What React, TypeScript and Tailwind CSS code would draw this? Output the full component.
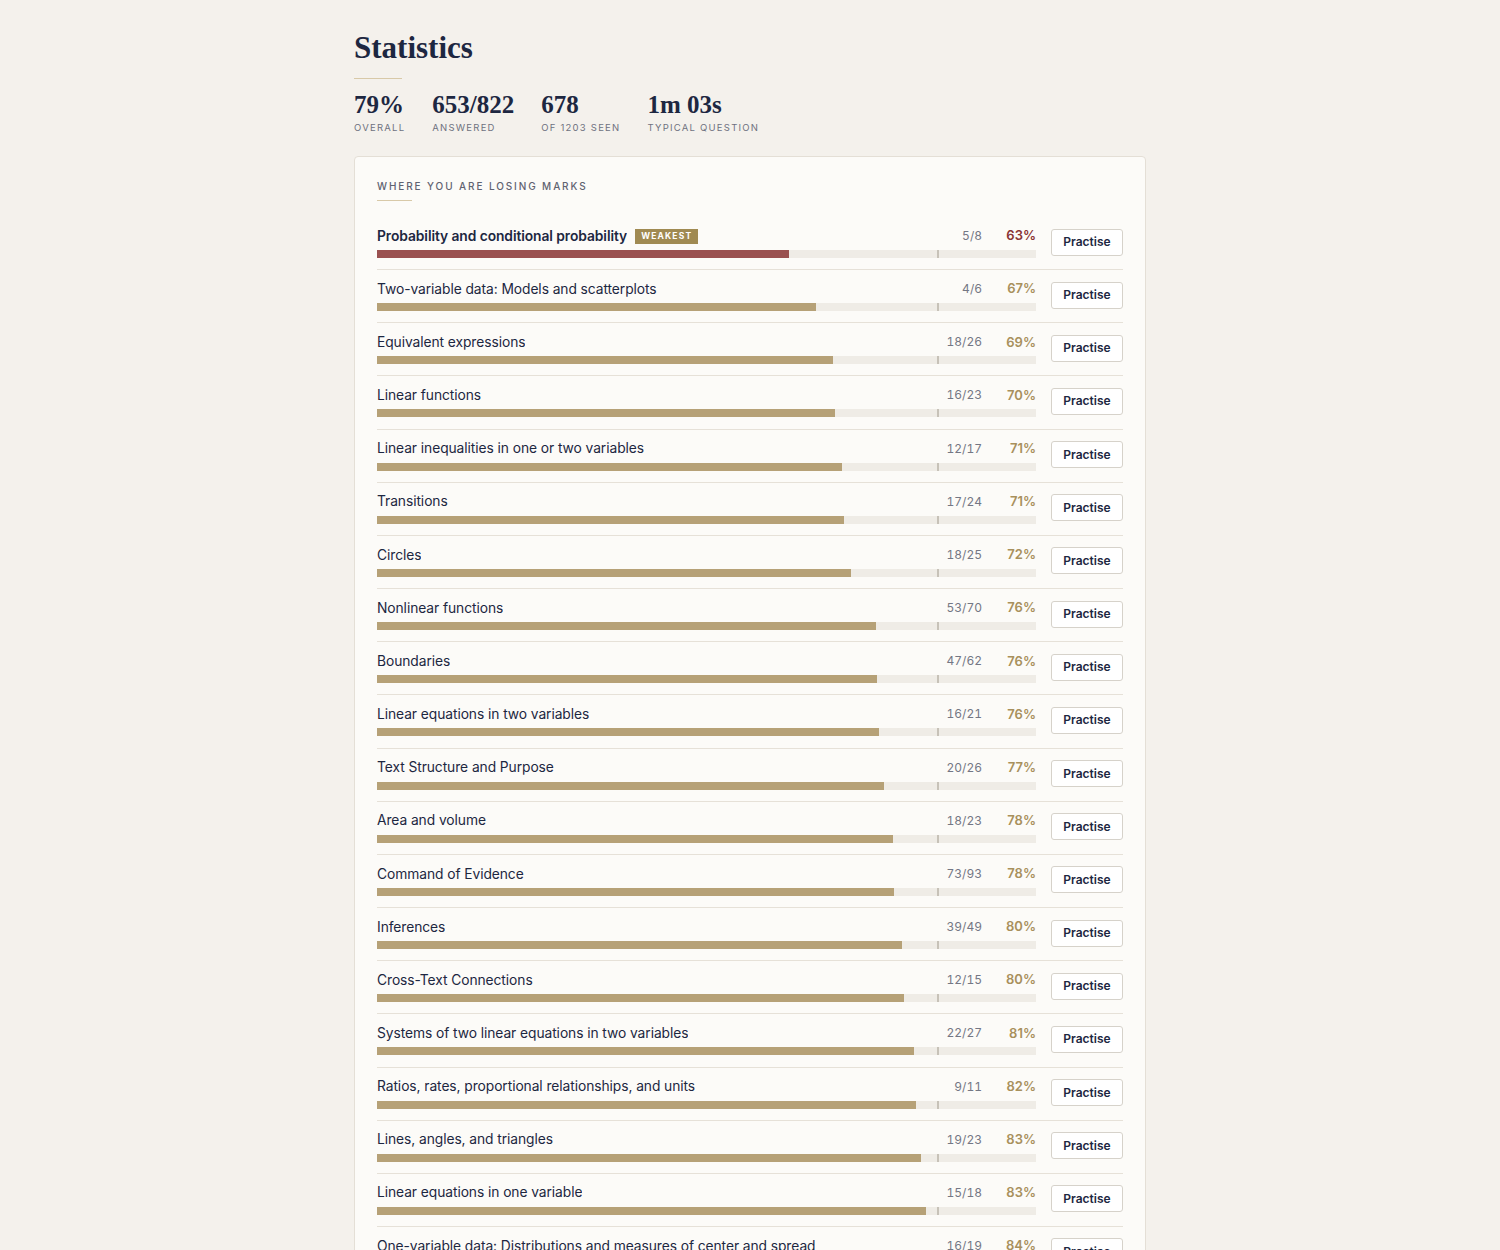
import React from 'react';

type Topic = { name: string; correct: number; total: number };

const topics: Topic[] = [
  { name: 'Probability and conditional probability', correct: 5, total: 8 },
  { name: 'Two-variable data: Models and scatterplots', correct: 4, total: 6 },
  { name: 'Equivalent expressions', correct: 18, total: 26 },
  { name: 'Linear functions', correct: 16, total: 23 },
  { name: 'Linear inequalities in one or two variables', correct: 12, total: 17 },
  { name: 'Transitions', correct: 17, total: 24 },
  { name: 'Circles', correct: 18, total: 25 },
  { name: 'Nonlinear functions', correct: 53, total: 70 },
  { name: 'Boundaries', correct: 47, total: 62 },
  { name: 'Linear equations in two variables', correct: 16, total: 21 },
  { name: 'Text Structure and Purpose', correct: 20, total: 26 },
  { name: 'Area and volume', correct: 18, total: 23 },
  { name: 'Command of Evidence', correct: 73, total: 93 },
  { name: 'Inferences', correct: 39, total: 49 },
  { name: 'Cross-Text Connections', correct: 12, total: 15 },
  { name: 'Systems of two linear equations in two variables', correct: 22, total: 27 },
  { name: 'Ratios, rates, proportional relationships, and units', correct: 9, total: 11 },
  { name: 'Lines, angles, and triangles', correct: 19, total: 23 },
  { name: 'Linear equations in one variable', correct: 15, total: 18 },
  { name: 'One-variable data: Distributions and measures of center and spread', correct: 16, total: 19 },
];

const stats = [
  { value: '79%', label: 'Overall' },
  { value: '653/822', label: 'Answered' },
  { value: '678', label: 'of 1203 seen' },
  { value: '1m 03s', label: 'Typical question' },
];

const TopicRow = ({ topic, weakest }: { topic: Topic; weakest: boolean }) => {
  const ratio = topic.correct / topic.total;
  const pct = Math.round(ratio * 100);
  return (
    <div className="flex items-center gap-[15px] border-b border-[#e6e1d8] pt-[9px] pb-[11.17px]">
      <div className="flex-1 min-w-0">
        <div className="flex items-center h-5">
          <span
            className={
              weakest
                ? 'text-[13.8px] font-semibold tracking-[-0.005em] text-[#1d2741] truncate'
                : 'text-[13.8px] tracking-[-0.005em] text-[#1d2741] truncate'
            }
          >
            {topic.name}
          </span>
          {weakest && (
            <span className="ml-2 bg-[#a08a52] text-white text-[8.5px] font-bold tracking-[0.14em] px-[6px] py-[2px] leading-[11px]">
              WEAKEST
            </span>
          )}
          <span className="ml-auto text-[12px] text-[#747784] tabular-nums">
            {topic.correct}/{topic.total}
          </span>
          <span
            className={
              weakest
                ? 'w-[54px] text-right text-[13px] font-semibold text-[#8a3434]'
                : 'w-[54px] text-right text-[13px] font-semibold text-[#a8905c]'
            }
          >
            {pct}%
          </span>
        </div>
        <div className="relative mt-[4px] h-[8px] bg-[#efece6]">
          <div
            className={weakest ? 'h-full bg-[#9a5150]' : 'h-full bg-[#b6a177]'}
            style={{ width: `${ratio * 100}%` }}
          />
          <div className="absolute top-0 left-[85%] h-full w-[1.5px] bg-[#c7c2b8]" />
        </div>
      </div>
      <button className="w-[72px] h-[27px] shrink-0 rounded-[3px] border border-[#d6d2ca] bg-white text-[12px] font-semibold text-[#1d2741]">
        Practise
      </button>
    </div>
  );
};

const App = () => {
  return (
    <div className="min-h-screen bg-[#f4f1ec] font-['Inter','Noto_Sans',sans-serif]">
      <div className="w-[792px] ml-[354px] pt-[30px]">
        <h1 className="font-['Liberation_Serif',serif] font-bold text-[31px] leading-[36px] text-[#1d2741]">
          Statistics
        </h1>
        <div className="mt-3 w-12 h-px bg-[#d8c9a8]" />

        <div className="mt-[13px] flex gap-[27px]">
          {stats.map((s) => (
            <div key={s.label}>
              <div className="font-['Liberation_Serif',serif] font-bold text-[25px] leading-[26px] text-[#1d2741]">
                {s.value}
              </div>
              <div className="mt-[4px] text-[9.5px] uppercase tracking-[0.13em] leading-[12px] text-[#6f7280]">
                {s.label}
              </div>
            </div>
          ))}
        </div>

        <div className="mt-[22px] rounded-[4px] border border-[#e4dfd6] bg-[#fcfbf8] px-[22px] pt-[23px] pb-4">
          <div className="text-[10px] font-medium uppercase tracking-[0.19em] leading-[12px] text-[#5f6270]">
            Where you are losing marks
          </div>
          <div className="mt-2 w-[35px] h-px bg-[#d8c9a8]" />
          <div className="mt-4">
            {topics.map((t, i) => (
              <TopicRow key={t.name} topic={t} weakest={i === 0} />
            ))}
          </div>
        </div>
      </div>
    </div>
  );
};

export default App;
